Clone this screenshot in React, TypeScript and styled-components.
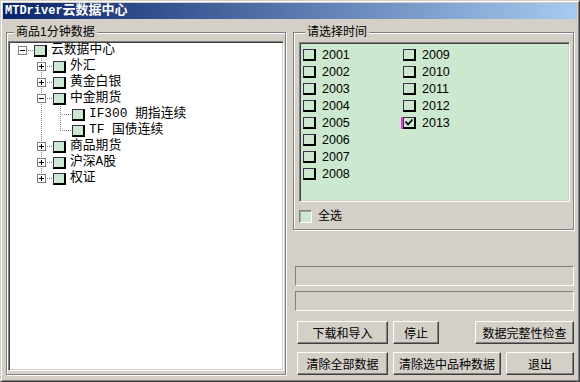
import styled, { createGlobalStyle } from "styled-components";

const FACE = "#d4d0c8";
const SHADOW = "#808080";
const DARK = "#404040";
const EYE = "#cce8cf";
const UI_FONT = `"Liberation Sans", "Noto Sans CJK SC", sans-serif`;
const TREE_FONT = `"Liberation Mono", "Noto Sans CJK SC", monospace`;

type Toggle = "plus" | "minus";

type TreeRowData = {
  label: string;
  guides: boolean[];
  up: boolean;
  down: boolean;
  toggle?: Toggle;
};

const treeRows: TreeRowData[] = [
  { label: "云数据中心", guides: [], up: false, down: false, toggle: "minus" },
  { label: "外汇", guides: [false], up: true, down: true, toggle: "plus" },
  { label: "黄金白银", guides: [false], up: true, down: true, toggle: "plus" },
  { label: "中金期货", guides: [false], up: true, down: true, toggle: "minus" },
  { label: "IF300 期指连续", guides: [false, true], up: true, down: true },
  { label: "TF 国债连续", guides: [false, true], up: true, down: false },
  { label: "商品期货", guides: [false], up: true, down: true, toggle: "plus" },
  { label: "沪深A股", guides: [false], up: true, down: true, toggle: "plus" },
  { label: "权证", guides: [false], up: true, down: false, toggle: "plus" },
];

const years = [2001, 2002, 2003, 2004, 2005, 2006, 2007, 2008, 2009, 2010, 2011, 2012, 2013];

const GlobalStyle = createGlobalStyle`
  * { box-sizing: border-box; }
  html, body { margin: 0; padding: 0; background: ${FACE}; }
  body { width: 580px; height: 382px; overflow: hidden; }
`;

const Window = styled.div`
  width: 580px;
  height: 382px;
  display: flex;
  flex-direction: column;
  background: ${FACE};
  border: 1px solid;
  border-color: ${FACE} ${DARK} ${DARK} ${FACE};
  box-shadow: inset 1px 1px #fff, inset -1px -1px ${SHADOW};
  padding: 2px 2px 1px 2px;
  font-family: ${UI_FONT};
  font-size: 12px;
  color: #000;
`;

const TitleBar = styled.div`
  height: 16px;
  flex: none;
  padding-left: 2px;
  background: linear-gradient(to right, #0a246a, #a6caf0);
  color: #fff;
  font-family: ${TREE_FONT};
  font-weight: bold;
  font-size: 12px;
  line-height: 16px;
  white-space: pre;
`;

const TitleCjk = styled.span`
  font-size: 13px;
`;

const Body = styled.div`
  flex: 1;
  display: flex;
  gap: 7px;
  padding: 6px 3px 7px 3px;
`;

const Group = styled.fieldset<{ $width: number; $pad: string }>`
  margin: 0;
  min-width: 0;
  width: ${(p) => p.$width}px;
  padding: ${(p) => p.$pad};
  border: 1px solid ${SHADOW};
  box-shadow: inset 1px 1px #fff, 1px 1px #fff;
`;

const Legend = styled.legend`
  margin-left: 6px;
  padding: 0 2px;
  font-size: 12px;
  line-height: 14px;
  background: ${FACE};
`;

const Tree = styled.div`
  height: 330px;
  background: #fff;
  border: 1px solid;
  border-color: ${SHADOW} #fff #fff ${SHADOW};
  box-shadow: inset 1px 1px ${DARK}, inset -1px -1px ${FACE};
  padding: 0 0 0 4px;
  font-family: ${TREE_FONT};
  font-size: 12.8px;
`;

const TreeRow = styled.div`
  display: flex;
  align-items: center;
  height: 16px;
`;

const LineCell = styled.svg`
  display: block;
  flex: none;
`;

const Check = styled.span<{ $fill: string }>`
  flex: none;
  display: flex;
  align-items: center;
  justify-content: center;
  width: 13px;
  height: 12px;
  margin-top: 1px;
  background: ${(p) => p.$fill};
  border-style: solid;
  border-width: 1px 2px 2px 1px;
  border-color: #3c2f52 #000 #000 #3c2f52;
`;

const NodeLabel = styled.span`
  margin-left: 4px;
  line-height: 16px;
  white-space: pre;
`;

const RightColumn = styled.div`
  width: 281px;
  display: flex;
  flex-direction: column;
`;

const YearList = styled.div`
  height: 160px;
  display: grid;
  grid-template-rows: repeat(8, 17px);
  grid-auto-flow: column;
  grid-auto-columns: 100px;
  align-content: start;
  padding: 3px 0 0 3px;
  background: ${EYE};
  border: 1px solid;
  border-color: ${SHADOW} #fff #fff ${SHADOW};
  box-shadow: inset 1px 1px ${DARK}, inset -1px -1px ${FACE};
`;

const YearItem = styled.div<{ $focus?: boolean }>`
  display: flex;
  align-items: center;
  gap: 6px;
  font-family: "Liberation Sans", sans-serif;
  font-size: 12.5px;

  ${Check} {
    box-shadow: ${(p) => (p.$focus ? "-2px 0 0 #e03ce0" : "none")};
  }
`;

const SelectAll = styled.div`
  height: 27px;
  display: flex;
  align-items: flex-start;
  gap: 6px;
  padding-top: 8px;
  line-height: 13px;
`;

const SunkenBox = styled.span`
  width: 13px;
  height: 13px;
  flex: none;
  background: ${EYE};
  border: 1px solid;
  border-color: ${SHADOW} #fff #fff ${SHADOW};
  box-shadow: inset 1px 1px #a8a49c;
`;

const Progress = styled.div<{ $top: number }>`
  height: 20px;
  margin: ${(p) => p.$top}px 0 0 2px;
  border: 1px solid;
  border-color: ${SHADOW} #fff #fff ${SHADOW};
`;

const ButtonRow = styled.div<{ $top: number }>`
  display: flex;
  gap: 5px;
  padding-left: 4px;
  margin-top: ${(p) => p.$top}px;
`;

const Button = styled.button<{ $width: number; $push?: boolean }>`
  width: ${(p) => p.$width}px;
  height: 23px;
  margin: 0 0 0 ${(p) => (p.$push ? "auto" : "0")};
  padding: 0;
  background: ${FACE};
  border: 1px solid;
  border-color: #fff ${DARK} ${DARK} #fff;
  box-shadow: inset -1px -1px ${SHADOW};
  font-family: ${UI_FONT};
  font-size: 12px;
  color: #000;
`;

function dotsV(x: number, from: number, to: number, key: string) {
  const out = [];
  for (let y = from; y < to; y += 2) {
    out.push(<rect key={key + y} x={x} y={y} width={1} height={1} />);
  }
  return out;
}

function Guide({ line }: { line: boolean }) {
  return (
    <LineCell width={19} height={16} viewBox="0 0 19 16">
      <g fill={SHADOW}>{line && dotsV(9, 0, 16, "g")}</g>
    </LineCell>
  );
}

function Connector({ up, down, toggle }: { up: boolean; down: boolean; toggle?: Toggle }) {
  const dots = [];
  if (up) dots.push(...dotsV(9, 0, 9, "u"));
  if (down) dots.push(...dotsV(9, 10, 16, "d"));
  for (let x = 11; x < 21; x += 2) {
    dots.push(<rect key={"h" + x} x={x} y={8} width={1} height={1} />);
  }
  return (
    <LineCell width={21} height={16} viewBox="0 0 21 16">
      <g fill={SHADOW}>{dots}</g>
      {toggle && (
        <g>
          <rect x={5.5} y={4.5} width={8} height={8} fill="#fff" stroke={SHADOW} />
          <rect x={7} y={8} width={5} height={1} fill="#000" />
          {toggle === "plus" && <rect x={9} y={6} width={1} height={5} fill="#000" />}
        </g>
      )}
    </LineCell>
  );
}

function Tick() {
  return (
    <svg width={10} height={9} viewBox="0 0 10 9">
      <polyline points="1.5,3.5 4,6.5 8.5,1.5" fill="none" stroke="#000" strokeWidth={1.8} />
    </svg>
  );
}

export default function App() {
  return (
    <>
      <GlobalStyle />
      <Window>
        <TitleBar>
          MTDriver<TitleCjk>云数据中心</TitleCjk>
        </TitleBar>
        <Body>
          <Group $width={280} $pad="2px 1px 1px 1px">
            <Legend>商品1分钟数据</Legend>
            <Tree>
              {treeRows.map((row) => (
                <TreeRow key={row.label}>
                  {row.guides.map((g, i) => (
                    <Guide key={i} line={g} />
                  ))}
                  <Connector up={row.up} down={row.down} toggle={row.toggle} />
                  <Check $fill={EYE} />
                  <NodeLabel>{row.label}</NodeLabel>
                </TreeRow>
              ))}
            </Tree>
          </Group>

          <RightColumn>
            <Group $width={281} $pad="3px 3px 0 5px">
              <Legend>请选择时间</Legend>
              <YearList>
                {years.map((y) => (
                  <YearItem key={y} $focus={y === 2013}>
                    <Check $fill={EYE}>{y === 2013 && <Tick />}</Check>
                    {y}
                  </YearItem>
                ))}
              </YearList>
              <SelectAll>
                <SunkenBox />
                全选
              </SelectAll>
            </Group>

            <Progress $top={36} />
            <Progress $top={5} />

            <ButtonRow $top={10}>
              <Button $width={91}>下载和导入</Button>
              <Button $width={46}>停止</Button>
              <Button $width={99} $push>
                数据完整性检查
              </Button>
            </ButtonRow>
            <ButtonRow $top={8}>
              <Button $width={91}>清除全部数据</Button>
              <Button $width={108}>清除选中品种数据</Button>
              <Button $width={68}>退出</Button>
            </ButtonRow>
          </RightColumn>
        </Body>
      </Window>
    </>
  );
}
